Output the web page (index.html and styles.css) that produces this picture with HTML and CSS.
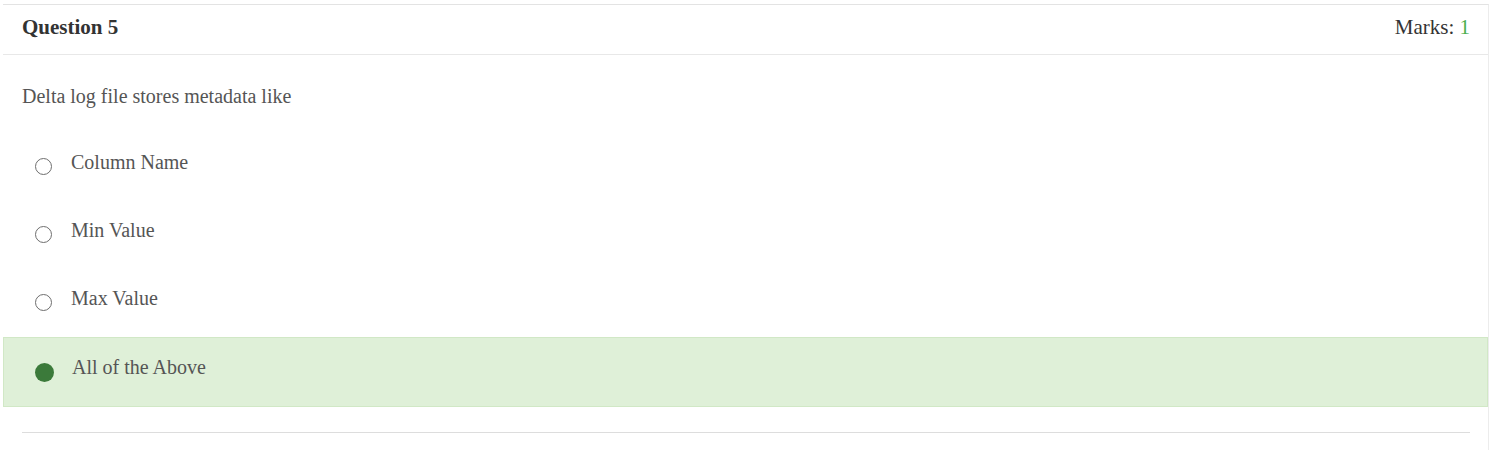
FILE: index.html
```html
<!DOCTYPE html>
<html>
<head>
<meta charset="utf-8">
<link rel="stylesheet" href="styles.css">
</head>
<body>
<div class="card">
  <div class="card-header">
    <span class="q-title">Question 5</span>
    <span class="marks">Marks: <span class="marks-val">1</span></span>
  </div>
  <div class="q-text">Delta log file stores metadata like</div>
  <div class="options">
    <div class="option">
      <span class="radio"></span>
      <span class="opt-label">Column Name</span>
    </div>
    <div class="option">
      <span class="radio"></span>
      <span class="opt-label">Min Value</span>
    </div>
    <div class="option">
      <span class="radio"></span>
      <span class="opt-label">Max Value</span>
    </div>
    <div class="option selected">
      <span class="radio checked"></span>
      <span class="opt-label">All of the Above</span>
    </div>
  </div>
  <div class="footer-line"></div>
</div>
</body>
</html>
```

FILE: styles.css
```css
html, body {
  margin: 0;
  padding: 0;
  background: #ffffff;
}

body {
  font-family: "Liberation Serif", "Times New Roman", serif;
  color: #555555;
  font-size: 20px;
}

.card {
  margin: 4px 2px 0 3px;
  border-top: 1px solid #e3e3e3;
  border-right: 1px solid #ececec;
  background: #fff;
  height: 446px;
  box-sizing: border-box;
}

.card-header {
  display: flex;
  justify-content: space-between;
  align-items: flex-start;
  height: 49px;
  box-sizing: content-box;
  padding: 0 18px 0 19px;
  border-bottom: 1px solid #e8e8e8;
}

.q-title,
.marks {
  margin-top: 10px;
  line-height: 24px;
  font-size: 21px;
  color: #333333;
}

.q-title {
  font-weight: bold;
}

.marks-val {
  color: #4caf50;
}

.q-text {
  padding: 0 19px;
  height: 78px;
  line-height: 82px;
  font-size: 20px;
}

.options {
  display: flex;
  flex-direction: column;
}

.option {
  display: flex;
  align-items: flex-start;
  height: 68px;
  box-sizing: border-box;
  border: 1px solid transparent;
  padding: 17px 0 0 31px;
}

.option.selected {
  height: 70px;
  background: #dff0d8;
  border-color: #d1e8c6;
  padding-top: 18px;
}

.radio {
  width: 17px;
  height: 17px;
  box-sizing: border-box;
  border: 1.6px solid #6e6e6e;
  border-radius: 50%;
  margin-top: 7px;
  flex: none;
}

.radio.checked {
  width: 19px;
  height: 19px;
  background: #3b7a3a;
  border: none;
}

.opt-label {
  margin-left: 19px;
  font-size: 20px;
  line-height: 22px;
  color: #555555;
}

.selected .opt-label {
  margin-left: 18px;
}

.footer-line {
  margin: 25px 18px 0 19px;
  border-top: 1px solid #dddddd;
}
```
